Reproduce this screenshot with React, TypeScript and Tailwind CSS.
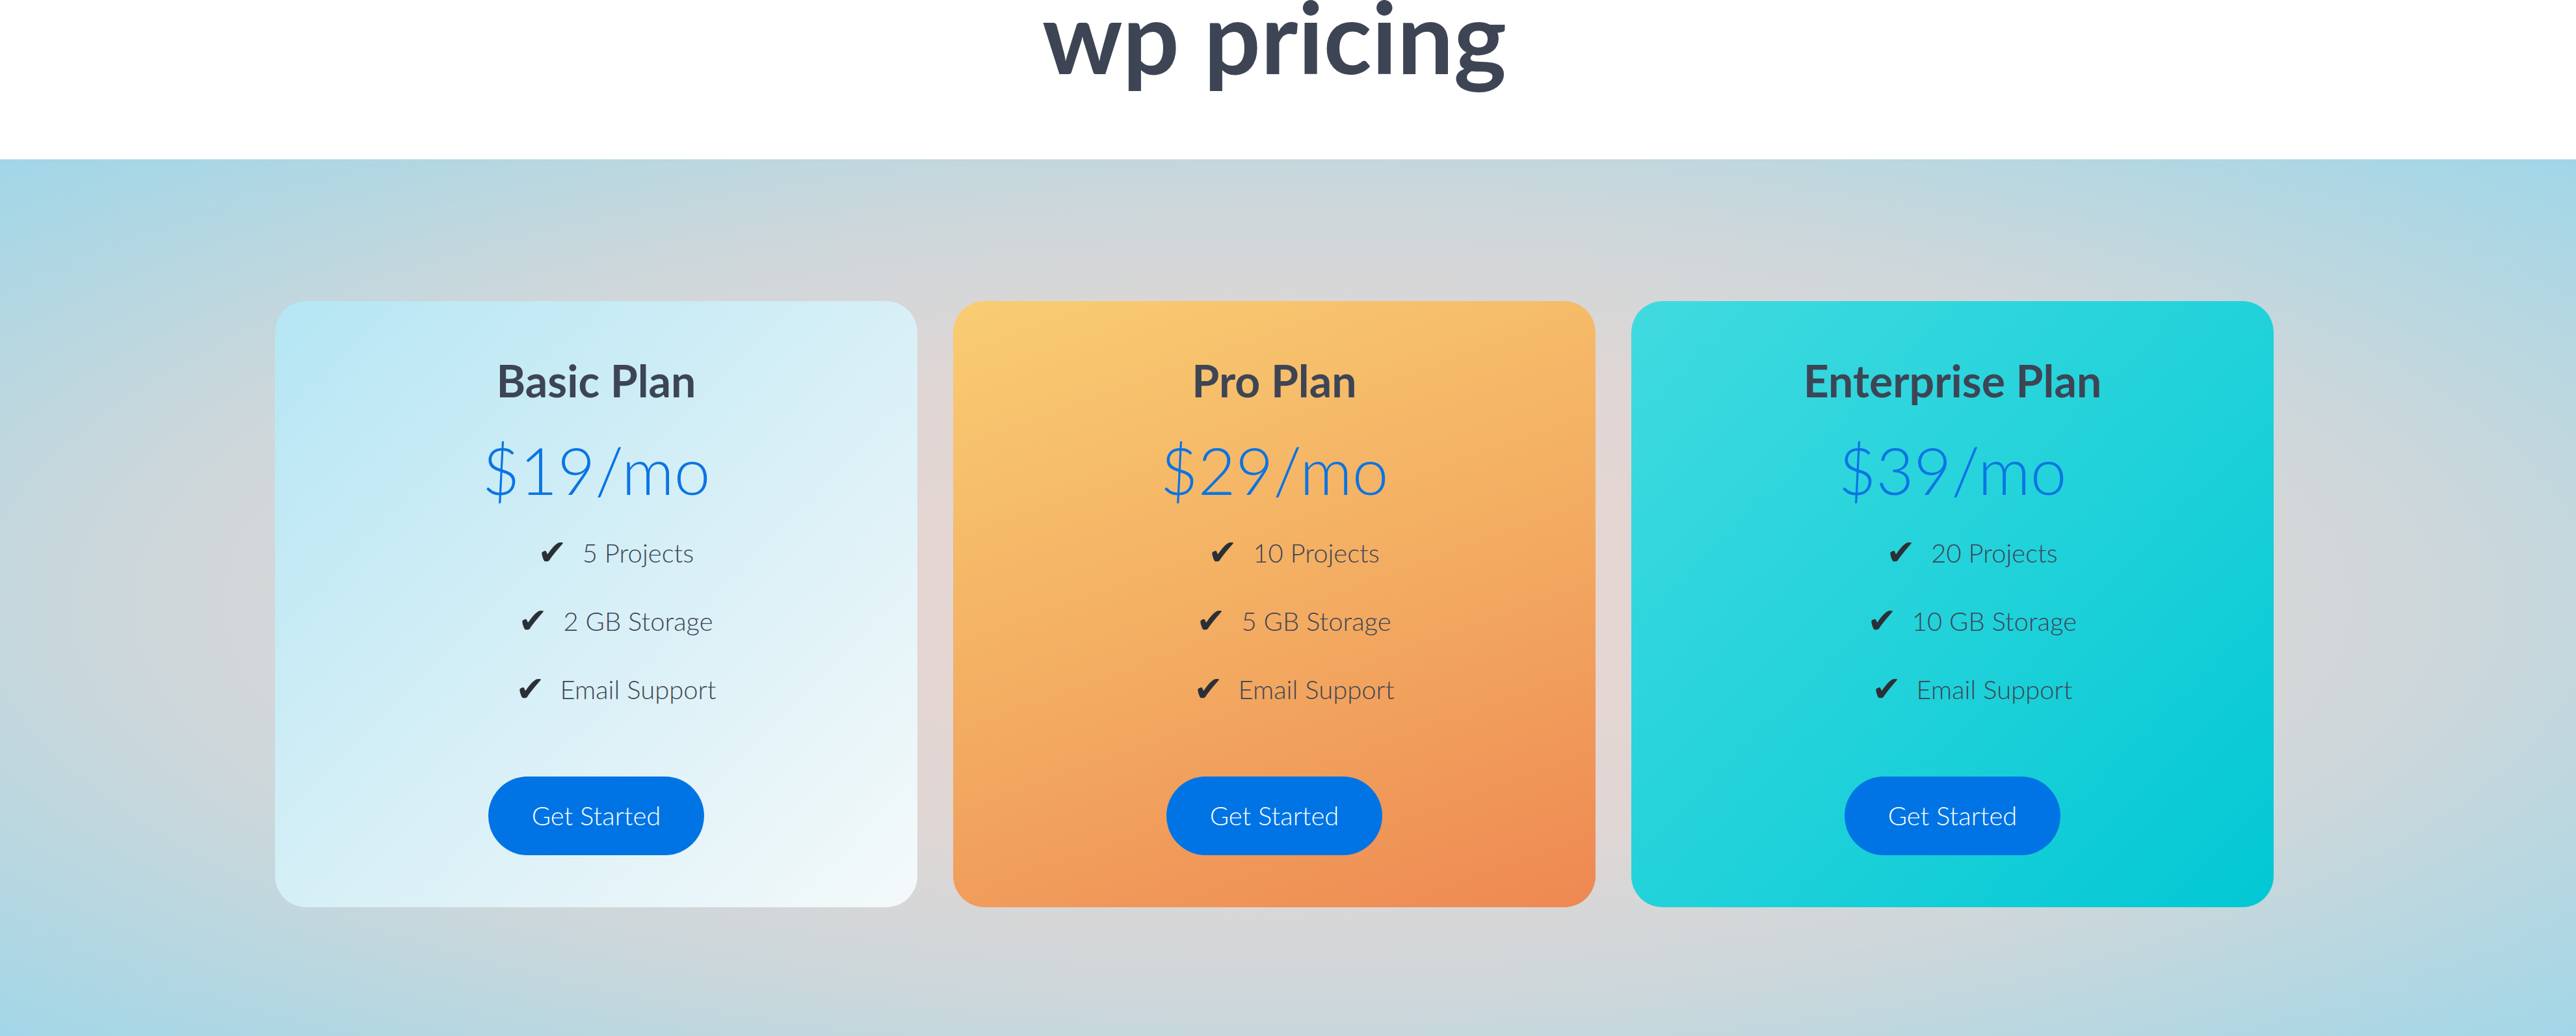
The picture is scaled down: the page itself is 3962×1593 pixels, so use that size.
const plans = [
  {
    name: "Basic Plan",
    price: "$19/mo",
    features: ["5 Projects", "2 GB Storage", "Email Support"],
    bg: "bg-[linear-gradient(135deg,#b5e6f4_0%,#d6eff6_50%,#f4f9fa_100%)]",
  },
  {
    name: "Pro Plan",
    price: "$29/mo",
    features: ["10 Projects", "5 GB Storage", "Email Support"],
    bg: "bg-[linear-gradient(160deg,#f9cd72_0%,#f3ad62_50%,#ee8852_100%)]",
  },
  {
    name: "Enterprise Plan",
    price: "$39/mo",
    features: ["20 Projects", "10 GB Storage", "Email Support"],
    bg: "bg-[linear-gradient(135deg,#40dae0_0%,#22d2da_50%,#02c8d4_100%)]",
  },
];

const App = () => {
  return (
    <div className="min-h-screen bg-white font-['Lato','Open_Sans',sans-serif]">
      <header className="h-[245px] w-[3920px] flex justify-center">
        <h1 className="text-[154px] leading-[110px] font-bold text-[#3d4555]">
          wp pricing
        </h1>
      </header>

      <section className="py-[218px] bg-[radial-gradient(ellipse_at_center,#e8d5d1_0%,#e0d6d4_38%,#cfd7da_62%,#b6d7e1_82%,#a0d6e8_100%)]">
        <div className="w-[3920px] flex justify-center gap-[55px]">
          {plans.map((plan) => (
            <div
              key={plan.name}
              className={`w-[988px] h-[932px] rounded-[48px] pt-[81px] flex flex-col items-center ${plan.bg}`}
            >
              <h2 className="text-[68px] leading-[1.2] font-bold text-[#3d4555]">
                {plan.name}
              </h2>
              <p className="mt-[36px] text-[100px] leading-[1.2] font-light text-[#0a74e4]">
                {plan.price}
              </p>
              <ul className="mt-[39px] pl-[60px] flex flex-col items-center gap-[47px]">
                {plan.features.map((f) => (
                  <li
                    key={f}
                    className="flex items-center h-[58px] text-[40px] leading-[1.2] font-light text-[#3d4555]"
                  >
                    <span className="mr-[24px] font-['DejaVu_Sans',sans-serif] text-[54px] leading-none text-[#2a3036]">
                      ✔
                    </span>
                    {f}
                  </li>
                ))}
              </ul>
              <button className="mt-[105px] w-[332px] h-[121px] rounded-full bg-[#0074e4] text-white text-[40px] font-light">
                Get Started
              </button>
            </div>
          ))}
        </div>
      </section>
    </div>
  );
};

export default App;
